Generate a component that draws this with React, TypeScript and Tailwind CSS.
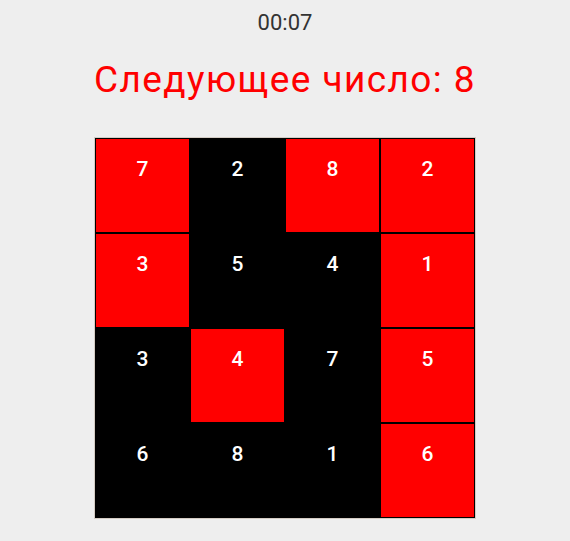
import React from "react";

type Cell = { n: number; red: boolean };

const rows: Cell[][] = [
  [
    { n: 7, red: true },
    { n: 2, red: false },
    { n: 8, red: true },
    { n: 2, red: true },
  ],
  [
    { n: 3, red: true },
    { n: 5, red: false },
    { n: 4, red: false },
    { n: 1, red: true },
  ],
  [
    { n: 3, red: false },
    { n: 4, red: true },
    { n: 7, red: false },
    { n: 5, red: true },
  ],
  [
    { n: 6, red: false },
    { n: 8, red: false },
    { n: 1, red: false },
    { n: 6, red: true },
  ],
];

export default function App() {
  return (
    <div
      className="w-full min-h-[541px] bg-[#eeeeee] flex flex-col items-center"
      style={{ fontFamily: "Roboto, 'Noto Sans', sans-serif" }}
    >
      <div className="pt-[10px] text-[22px] leading-[26px] text-[#333333]">00:07</div>
      <div className="mt-[24px] text-[37px] leading-[40px] tracking-[1.4px] text-[#ff0000]">
        Следующее число: 8
      </div>
      <div className="mt-[37px] border border-[#d4ccc4] bg-black">
        <div className="grid grid-cols-4 w-[380px]">
          {rows.flat().map((c, i) => (
            <div
              key={i}
              className={`h-[95px] border border-black flex justify-center pt-[18px] text-[21px] leading-[24px] font-medium text-white ${
                c.red ? "bg-[#ff0000]" : "bg-black"
              }`}
            >
              {c.n}
            </div>
          ))}
        </div>
      </div>
    </div>
  );
}
